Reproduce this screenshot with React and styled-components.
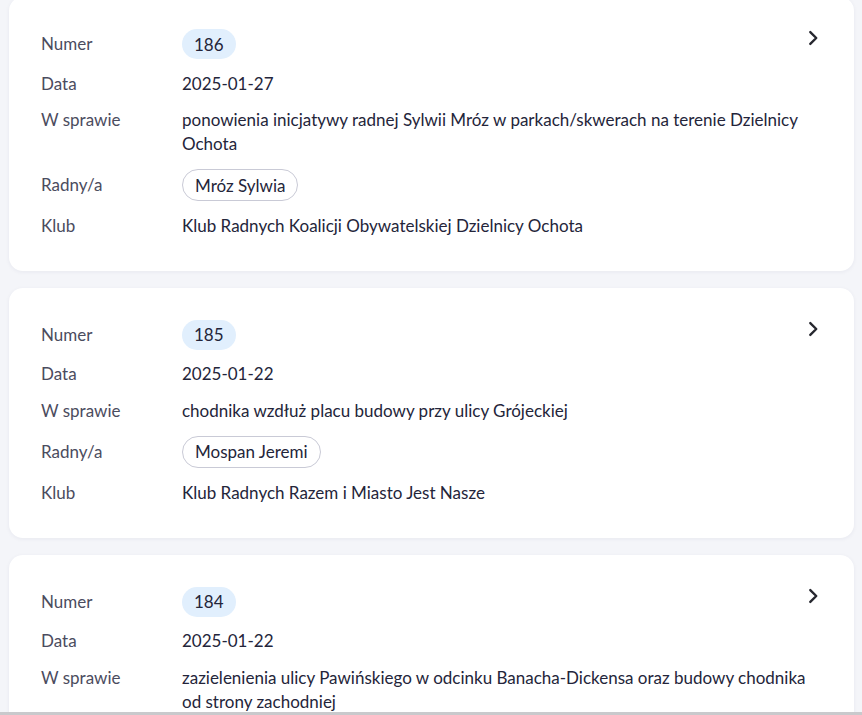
import React from "react";
import styled, { createGlobalStyle } from "styled-components";

const GlobalStyle = createGlobalStyle`
  html, body { margin: 0; padding: 0; background: #f4f5f9; }
  body { font-family: "Lato", "Noto Sans", sans-serif; overflow: hidden; }
  * { box-sizing: border-box; }
`;

const Page = styled.div`
  height: 715px;
  display: flex;
  flex-direction: column;
  overflow: hidden;
  border-bottom: 3px solid #c9c9cc;
`;

const List = styled.div`
  flex: 1;
  overflow: hidden;
  display: flex;
  flex-direction: column;
  gap: 17px;
  padding: 0 8px 0 9px;
  margin-top: -3px;
`;

const Card = styled.article`
  position: relative;
  background: #fff;
  border-radius: 14px;
  box-shadow: 0 1px 4px rgba(30, 40, 80, 0.06);
  padding: 32px 32px 33px 32px;
  display: flex;
  flex-direction: column;
  gap: 12.7px;
  flex-shrink: 0;
`;

const Row = styled.div`
  display: grid;
  grid-template-columns: 141px 1fr;
  align-items: ${(p) => (p.$top ? "start" : "center")};
  min-height: 24px;
`;

const Label = styled.div`
  font-size: 17px;
  line-height: 24px;
  color: #4b4c5e;
`;

const Value = styled.div`
  font-size: 17px;
  line-height: 24px;
  color: #24253a;
`;

const Badge = styled.span`
  display: inline-flex;
  align-items: center;
  justify-content: center;
  height: 30px;
  padding: 0 12px;
  border-radius: 15px;
  background: #e1effd;
  color: #24253a;
  font-size: 17px;
`;

const Chip = styled.span`
  display: inline-flex;
  align-items: center;
  height: 32px;
  padding: 0 12px;
  border-radius: 16px;
  border: 1px solid #c9cad6;
  color: #24253a;
  font-size: 17px;
`;

const ChevronButton = styled.button`
  position: absolute;
  top: 28px;
  right: 28px;
  width: 26px;
  height: 26px;
  border: 0;
  padding: 0;
  background: transparent;
  display: flex;
  align-items: center;
  justify-content: center;
  color: #26272f;
  cursor: pointer;
`;

const Chevron = () => (
  <svg width="26" height="26" viewBox="0 0 24 24" fill="none">
    <path d="M9.5 6.5 15 12l-5.5 5.5" stroke="currentColor" strokeWidth="2.2" strokeLinecap="round" strokeLinejoin="round" />
  </svg>
);

const items = [
  {
    numer: "186",
    data: "2025-01-27",
    sprawa: "ponowienia inicjatywy radnej Sylwii Mróz w parkach/skwerach na terenie Dzielnicy Ochota",
    radny: "Mróz Sylwia",
    klub: "Klub Radnych Koalicji Obywatelskiej Dzielnicy Ochota",
  },
  {
    numer: "185",
    data: "2025-01-22",
    sprawa: "chodnika wzdłuż placu budowy przy ulicy Grójeckiej",
    radny: "Mospan Jeremi",
    klub: "Klub Radnych Razem i Miasto Jest Nasze",
  },
  {
    numer: "184",
    data: "2025-01-22",
    sprawa: "zazielenienia ulicy Pawińskiego w odcinku Banacha-Dickensa oraz budowy chodnika od strony zachodniej",
    radny: "Kowalski Jan",
    klub: "Klub Radnych Koalicji Obywatelskiej Dzielnicy Ochota",
  },
];

export default function App() {
  return (
    <>
      <GlobalStyle />
      <Page>
        <List>
          {items.map((it) => (
            <Card key={it.numer}>
              <ChevronButton aria-label="Szczegóły">
                <Chevron />
              </ChevronButton>
              <Row>
                <Label>Numer</Label>
                <div><Badge>{it.numer}</Badge></div>
              </Row>
              <Row>
                <Label>Data</Label>
                <Value>{it.data}</Value>
              </Row>
              <Row $top>
                <Label>W sprawie</Label>
                <Value>{it.sprawa}</Value>
              </Row>
              <Row>
                <Label>Radny/a</Label>
                <div><Chip>{it.radny}</Chip></div>
              </Row>
              <Row>
                <Label>Klub</Label>
                <Value>{it.klub}</Value>
              </Row>
            </Card>
          ))}
        </List>
      </Page>
    </>
  );
}
